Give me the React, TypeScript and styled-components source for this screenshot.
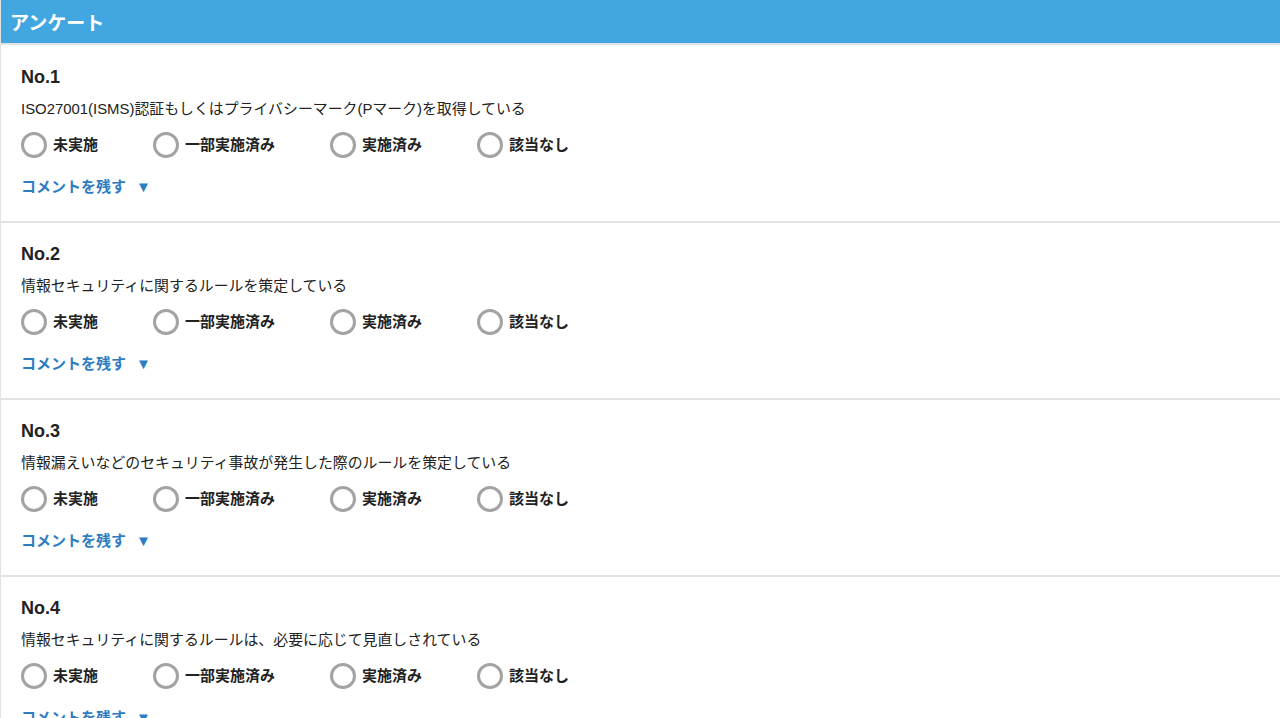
import React from "react";
import styled, { createGlobalStyle } from "styled-components";

const GlobalStyle = createGlobalStyle`
  html, body {
    margin: 0;
    padding: 0;
    background: #fff;
  }
  body {
    font-family: "Helvetica Neue", Arial, "Liberation Sans", "Noto Sans CJK JP", sans-serif;
    color: #222;
  }
`;

const Page = styled.div`
  width: 100%;
  border-left: 1px solid #e3e3e3;
  box-sizing: border-box;
`;

const Header = styled.header`
  height: 43px;
  background: #42a6e1;
  border-bottom: 2px solid #e2e2e2;
  display: flex;
  align-items: center;
  padding-left: 9px;
  color: #fff;
  font-size: 19px;
  font-weight: bold;
`;

const Question = styled.section`
  padding: 20px 20px 24px;
  border-bottom: 2px solid #e2e2e2;

  &:first-of-type {
    padding-top: 21px;
  }
`;

const Title = styled.h2`
  margin: 0;
  font-size: 18px;
  line-height: 22px;
  font-weight: bold;
  color: #222;
`;

const Text = styled.p`
  margin: 11px 0 0;
  font-size: 14.9px;
  line-height: 20px;
  color: #222;
`;

const Options = styled.div`
  display: flex;
  align-items: center;
  height: 26px;
  margin-top: 13px;
`;

const Option = styled.label`
  display: flex;
  align-items: center;
  gap: 6px;
  margin-right: 55px;
  font-size: 15px;
  line-height: 20px;
  font-weight: bold;
  color: #222;
  cursor: pointer;
`;

const Radio = styled.span`
  width: 26px;
  height: 26px;
  box-sizing: border-box;
  border-radius: 50%;
  border: 3px solid #a3a3a3;
  background: #fff;
`;

const CommentToggle = styled.button`
  display: flex;
  align-items: center;
  gap: 10px;
  height: 20px;
  margin-top: 19px;
  padding: 0;
  border: none;
  background: none;
  font-family: inherit;
  font-size: 15px;
  line-height: 20px;
  font-weight: bold;
  color: #2d7dc2;
  cursor: pointer;
`;

const Arrow = styled.span`
  font-size: 15px;
  line-height: 20px;
`;

const choices = ["未実施", "一部実施済み", "実施済み", "該当なし"];

const questions = [
  "ISO27001(ISMS)認証もしくはプライバシーマーク(Pマーク)を取得している",
  "情報セキュリティに関するルールを策定している",
  "情報漏えいなどのセキュリティ事故が発生した際のルールを策定している",
  "情報セキュリティに関するルールは、必要に応じて見直しされている",
];

export default function App() {
  return (
    <Page>
      <GlobalStyle />
      <Header>アンケート</Header>
      {questions.map((q, i) => (
        <Question key={i}>
          <Title>No.{i + 1}</Title>
          <Text>{q}</Text>
          <Options>
            {choices.map((c) => (
              <Option key={c}>
                <Radio />
                {c}
              </Option>
            ))}
          </Options>
          <CommentToggle>
            コメントを残す
            <Arrow>▼</Arrow>
          </CommentToggle>
        </Question>
      ))}
    </Page>
  );
}
